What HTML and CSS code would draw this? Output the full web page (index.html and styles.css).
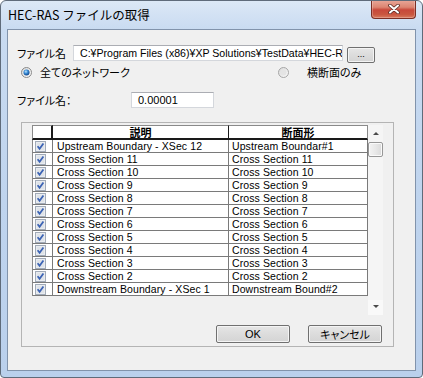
FILE: index.html
```html
<!DOCTYPE html>
<html lang="ja">
<head>
<meta charset="utf-8">
<title>HEC-RAS ファイルの取得</title>
<link rel="stylesheet" href="styles.css">
</head>
<body>
<div class="window">
  <div class="titlebar">
    <span class="title">HEC-RAS ファイルの取得</span>
    <div class="close">
      <svg width="16" height="10" viewBox="0 0 16 10">
        <path d="M4 1.5 L12 8.5 M12 1.5 L4 8.5" stroke="#5a2a24" stroke-width="3.6" stroke-linecap="round"/>
        <path d="M4 1.5 L12 8.5 M12 1.5 L4 8.5" stroke="#ffffff" stroke-width="2" stroke-linecap="round"/>
      </svg>
    </div>
  </div>
  <div class="client">
    <div class="row row-file">
      <span class="lbl lbl-file">ファイル名</span>
      <div class="input input-path"><span class="path-text">C:¥Program Files (x86)¥XP Solutions¥TestData¥HEC-RAS</span></div>
      <div class="btn btn-browse">...</div>
    </div>
    <div class="row row-radio">
      <div class="radio-item radio-first">
        <svg class="radio" width="11" height="11" viewBox="0 0 11 11">
          <defs>
            <radialGradient id="rb" cx="0.4" cy="0.35" r="0.6">
              <stop offset="0" stop-color="#bfe6ff"/>
              <stop offset="0.5" stop-color="#3c8fd8"/>
              <stop offset="1" stop-color="#174f96"/>
            </radialGradient>
            <linearGradient id="rg" x1="0" y1="0" x2="1" y2="1">
              <stop offset="0" stop-color="#d8d8d8"/>
              <stop offset="1" stop-color="#fbfbfb"/>
            </linearGradient>
          </defs>
          <circle cx="5.5" cy="5.5" r="5" fill="url(#rg)" stroke="#8a8a8a" stroke-width="1"/>
          <circle cx="5.5" cy="5.5" r="3" fill="url(#rb)"/>
        </svg>
        <span class="radio-text">全てのネットワーク</span>
      </div>
      <div class="radio-item">
        <svg class="radio" width="11" height="11" viewBox="0 0 11 11">
          <circle cx="5.5" cy="5.5" r="5" fill="url(#rg)" stroke="#a6a6a6" stroke-width="1"/>
          <circle cx="5.5" cy="5.5" r="3" fill="#e4e4e4"/>
        </svg>
        <span class="radio-text radio-text-2">横断面のみ</span>
      </div>
    </div>
    <div class="row row-tol">
      <span class="lbl lbl-tol">ファイル名：</span>
      <div class="input input-tol">0.00001</div>
    </div>
    <div class="group">
      <div class="gridwrap">
        <div class="grid">
          <div class="gh gh-check"></div>
          <div class="gh gh-c2">説明</div>
          <div class="gh gh-c3">断面形</div>
        </div>
        <div class="grid grid-body" id="gridBody"></div>
        <div class="scrollbar">
          <div class="sb-btn"><span class="arrow-up"></span></div>
          <div class="sb-track"><div class="sb-thumb"></div></div>
          <div class="sb-btn sb-btn-down"><span class="arrow-down"></span></div>
        </div>
      </div>
      <div class="buttons">
        <div class="btn btn-dlg">OK</div>
        <div class="btn btn-dlg btn-jp">キャンセル</div>
      </div>
    </div>
  </div>
</div>
<script>
(function () {
  var rows = [
    ["Upstream Boundary - XSec 12", "Upstream Boundar#1"],
    ["Cross Section 11", "Cross Section 11"],
    ["Cross Section 10", "Cross Section 10"],
    ["Cross Section 9", "Cross Section 9"],
    ["Cross Section 8", "Cross Section 8"],
    ["Cross Section 7", "Cross Section 7"],
    ["Cross Section 6", "Cross Section 6"],
    ["Cross Section 5", "Cross Section 5"],
    ["Cross Section 4", "Cross Section 4"],
    ["Cross Section 3", "Cross Section 3"],
    ["Cross Section 2", "Cross Section 2"],
    ["Downstream Boundary - XSec 1", "Downstream Bound#2"]
  ];
  var chk = '<svg width="11" height="11" viewBox="0 0 11 11">' +
    '<rect x="0.5" y="0.5" width="10" height="10" fill="#e9ecf0" stroke="#a2abb8"/>' +
    '<rect x="2" y="2" width="7" height="7" fill="#dfe3e8"/>' +
    '<path d="M2.6 5.2 L4.6 7.8 L8.4 2.4" fill="none" stroke="#3a62b4" stroke-width="1.7"/></svg>';
  var body = document.getElementById('gridBody');
  var html = '';
  rows.forEach(function (r) {
    html += '<div class="gc gc-check">' + chk + '</div>' +
            '<div class="gc gc-c2">' + r[0] + '</div>' +
            '<div class="gc gc-c3">' + r[1] + '</div>';
  });
  body.innerHTML = html;
})();
</script>
</body>
</html>
```

FILE: styles.css
```css
* { box-sizing: border-box; }
html, body { margin: 0; padding: 0; background: #ffffff; }
body {
  font-family: "Noto Sans CJK JP", "Liberation Sans", sans-serif;
  color: #000;
}
.window {
  width: 423px;
  height: 378px;
  border: 1px solid #5f6b7a;
  border-radius: 6px 6px 4px 4px;
  background: linear-gradient(180deg, #dce8f6 0px, #c9dbf1 28px, #bfd4ee 200px, #bad0ec 100%);
  display: flex;
  flex-direction: column;
  overflow: hidden;
}
.titlebar {
  height: 28px;
  display: flex;
  align-items: flex-start;
  flex: none;
}
.title {
  font-size: 12.5px;
  line-height: 28px;
  padding-left: 7px;
  color: #000;
  white-space: nowrap;
}
.close {
  margin-left: auto;
  margin-right: 6px;
  margin-top: -1px;
  width: 45px;
  height: 19px;
  border: 1px solid #7b2e24;
  border-top: none;
  border-radius: 0 0 4px 4px;
  background: linear-gradient(180deg, #e9a89a 0%, #dc8572 40%, #c8483a 55%, #c9563f 80%, #d97a5e 100%);
  display: flex;
  align-items: center;
  justify-content: center;
  box-shadow: inset 0 0 0 1px rgba(255,255,255,0.25);
}
.client {
  margin-left: 6px;
  width: 409px;
  height: 342px;
  border: 1px solid #8193ab;
  background: #f0f0f0;
  padding-top: 14px;
  display: flex;
  flex-direction: column;
}
.row { display: flex; flex: none; }
.lbl {
  font-size: 11px;
  font-feature-settings: "palt";
  white-space: nowrap;
}
.row-file {
  padding-left: 9px;
  height: 19px;
  align-items: flex-start;
}
.lbl-file { width: 56px; line-height: 17px; margin-top: 1px; }
.input {
  background: #fff;
  border: 1px solid #d4d7dc;
  border-top-color: #abadb3;
  font-family: "Liberation Sans", "Noto Sans CJK JP", sans-serif;
  font-size: 11px;
  white-space: nowrap;
  overflow: hidden;
}
.input-path {
  width: 270px;
  height: 16px;
  margin-top: 1px;
  padding-left: 6px;
  line-height: 14px;
  font-size: 10.6px;
}
.path-text { display: inline-block; }
.btn {
  border: 1px solid #707070;
  border-radius: 2px;
  background: linear-gradient(180deg, #e6e6e6 0%, #dcdcdc 50%, #d4d4d4 100%);
  box-shadow: inset 0 0 0 1px #f4f4f4;
  display: flex;
  align-items: center;
  justify-content: center;
  font-family: "Liberation Sans", "Noto Sans CJK JP", sans-serif;
  font-size: 11px;
}
.btn-browse {
  width: 28px;
  height: 16px;
  margin-left: 4px;
  margin-top: 3px;
  font-size: 9px;
  line-height: 10px;
  align-items: flex-end;
  padding-bottom: 3px;
}
.row-radio {
  margin-top: 4px;
  height: 11px;
  padding-left: 13px;
  align-items: center;
}
.radio-item { display: flex; align-items: center; }
.radio-first { width: 257px; }
.radio { flex: none; }
.radio-text {
  font-size: 11px;
  font-feature-settings: "palt";
  margin-left: 8px;
  line-height: 11px;
  white-space: nowrap;
}
.radio-text-2 { margin-left: 18px; }
.row-tol {
  margin-top: 14px;
  height: 16px;
  padding-left: 9px;
  align-items: center;
}
.lbl-tol { width: 114px; line-height: 16px; }
.input-tol {
  width: 83px;
  height: 16px;
  padding-left: 6px;
  line-height: 14px;
}
.group {
  margin-top: 14px;
  margin-left: 13px;
  width: 373px;
  height: 225px;
  border: 1px solid #b4b4b4;
  padding: 2px 10px 3px 10px;
  display: flex;
  flex-direction: column;
}
.gridwrap {
  height: 190px;
  width: 351px;
  position: relative;
  flex: none;
  display: flex;
  flex-direction: column;
}
.grid {
  display: grid;
  grid-template-columns: 21px 176px 139px;
  width: 336px;
  font-family: "Liberation Sans", sans-serif;
  font-size: 10.5px;
}
.gh {
  height: 15px;
  background: #fff;
  border-top: 1px solid #8a8a8a;
  border-bottom: 2px solid #1a1a1a;
  border-right: 1px solid #1a1a1a;
  font-family: "Noto Sans CJK JP", sans-serif;
  font-weight: bold;
  font-size: 11px;
  line-height: 12px;
  text-align: center;
}
.gh-check {
  border-left: 1px solid #8a8a8a;
  border-right: 2px solid #1a1a1a;
}
.gh-c3 { border-right: 1px solid #8a8a8a; }
.gc {
  height: 13px;
  background: #fff;
  border-right: 1px solid #7a7a7a;
  border-bottom: 1px solid #7a7a7a;
  line-height: 12px;
  white-space: nowrap;
  overflow: hidden;
  letter-spacing: 0.1px;
}
.gc-check {
  border-left: 1px solid #8a8a8a;
  display: flex;
  align-items: center;
  padding-left: 2px;
}
.gc-check svg { display: block; }
.gc-c2 { padding-left: 4px; }
.gc-c3 { padding-left: 3px; }
.scrollbar {
  position: absolute;
  right: 0;
  top: 0;
  width: 15px;
  height: 190px;
  background: #f5f5f5;
  display: flex;
  flex-direction: column;
}
.sb-btn {
  height: 15px;
  flex: none;
  display: flex;
  align-items: center;
  justify-content: center;
}
.sb-btn-down { background: #f9f9f9; }
.arrow-up {
  width: 0; height: 0;
  border-left: 3px solid transparent;
  border-right: 3px solid transparent;
  border-bottom: 3px solid #4a4a4a;
  margin-top: 2px;
}
.arrow-down {
  width: 0; height: 0;
  border-left: 3px solid transparent;
  border-right: 3px solid transparent;
  border-top: 3px solid #4a4a4a;
  margin-top: -3px;
}
.sb-track { flex: 1; padding: 2px 0 0 0; }
.sb-thumb {
  width: 15px;
  height: 15px;
  border: 1px solid #979797;
  border-radius: 2px;
  background: linear-gradient(90deg, #f3f3f3 0%, #e8e8e8 50%, #dadada 100%);
  box-shadow: inset 0 0 0 1px #fafafa;
}
.buttons {
  margin-top: 10px;
  display: flex;
  justify-content: flex-end;
  gap: 18px;
  padding-right: 1px;
}
.btn-dlg {
  width: 74px;
  height: 18px;
}
.btn-jp {
  font-family: "Noto Sans CJK JP", sans-serif;
  font-feature-settings: "palt";
}
```
